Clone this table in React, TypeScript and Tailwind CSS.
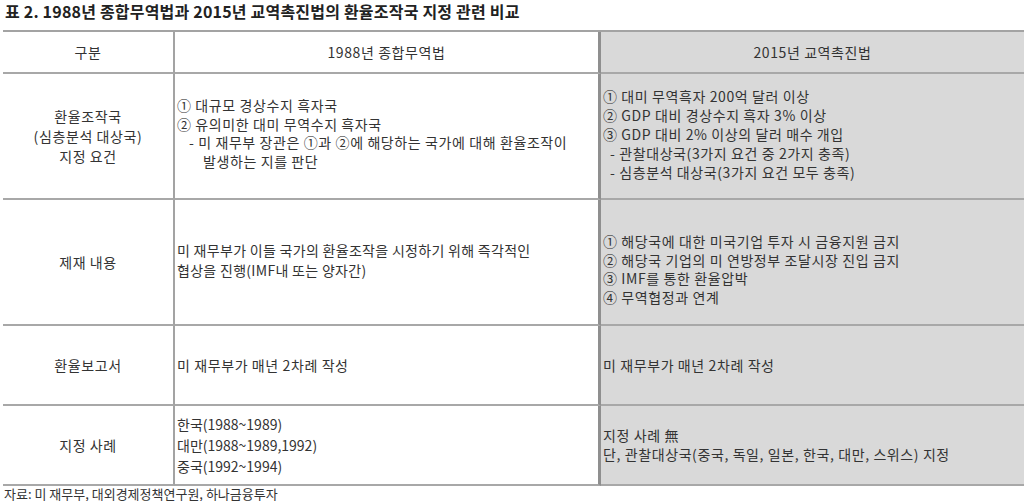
const font = { fontFamily: '"Noto Sans CJK KR", "Noto Sans", sans-serif' };

function Cell({
  children,
  shade,
  center,
  edge,
  className = "",
}: {
  children: React.ReactNode;
  shade?: boolean;
  center?: boolean;
  edge?: "thin" | "thick";
  className?: string;
}) {
  const border =
    edge === "thin"
      ? "border-r-2 border-r-[#a3a3a3]"
      : edge === "thick"
      ? "border-r-[3px] border-r-[#8f8f8f]"
      : "";
  return (
    <div
      className={`flex items-center border-b-2 border-b-[#a8a8a8] ${border} ${
        shade ? "bg-[#d9d9d9]" : "bg-white"
      } ${center ? "justify-center text-center" : "pl-[2px]"} ${className}`}
    >
      {children}
    </div>
  );
}

export default function App() {
  return (
    <div className="w-[1024px] h-[501px] overflow-hidden bg-white text-[#333]" style={font}>
      <div className="h-[30px] pl-[5px] text-[16px] font-bold leading-[23px] tracking-[0.2px] text-[#222]">
        표 2. 1988년 종합무역법과 2015년 교역촉진법의 환율조작국 지정 관련 비교
      </div>

      <div className="ml-[3px] border-t-2 border-t-[#a3a3a3] grid grid-cols-[172px_426px_1fr] grid-rows-[42px_126px_126px_80px_80px] text-[14px] tracking-[0.6px] whitespace-nowrap">
        {/* header */}
        <Cell center edge="thin">구분</Cell>
        <Cell center edge="thick">1988년 종합무역법</Cell>
        <Cell center shade>2015년 교역촉진법</Cell>

        {/* 지정 요건 */}
        <Cell center edge="thin" className="leading-[20px]">
          <div>
            환율조작국
            <br />
            (심층분석 대상국)
            <br />
            지정 요건
          </div>
        </Cell>
        <Cell edge="thick" className="leading-[18.5px] pb-[6px]">
          <div>
            <div>① 대규모 경상수지 흑자국</div>
            <div>② 유의미한 대미 무역수지 흑자국</div>
            <div className="pl-[12px]">- 미 재무부 장관은 ①과 ②에 해당하는 국가에 대해 환율조작이</div>
            <div className="pl-[26px]">발생하는 지를 판단</div>
          </div>
        </Cell>
        <Cell shade className="leading-[19px] pb-[4px]">
          <div>
            <div>① 대미 무역흑자 200억 달러 이상</div>
            <div>② GDP 대비 경상수지 흑자 3% 이상</div>
            <div>③ GDP 대비 2% 이상의 달러 매수 개입</div>
            <div className="pl-[7px]">- 관찰대상국(3가지 요건 중 2가지 충족)</div>
            <div className="pl-[7px]">- 심층분석 대상국(3가지 요건 모두 충족)</div>
          </div>
        </Cell>

        {/* 제재 내용 */}
        <Cell center edge="thin">제재 내용</Cell>
        <Cell edge="thick" className="leading-[20px] pb-[4px] tracking-[0.3px]">
          <div>
            <div>미 재무부가 이들 국가의 환율조작을 시정하기 위해 즉각적인</div>
            <div>협상을 진행(IMF내 또는 양자간)</div>
          </div>
        </Cell>
        <Cell shade className="leading-[18.5px] pt-[14px]">
          <div>
            <div>① 해당국에 대한 미국기업 투자 시 금융지원 금지</div>
            <div>② 해당국 기업의 미 연방정부 조달시장 진입 금지</div>
            <div>③ IMF를 통한 환율압박</div>
            <div>④ 무역협정과 연계</div>
          </div>
        </Cell>

        {/* 환율보고서 */}
        <Cell center edge="thin">환율보고서</Cell>
        <Cell edge="thick">미 재무부가 매년 2차례 작성</Cell>
        <Cell shade>미 재무부가 매년 2차례 작성</Cell>

        {/* 지정 사례 */}
        <Cell center edge="thin">지정 사례</Cell>
        <Cell edge="thick" className="leading-[21px] tracking-[0px]">
          <div>
            <div>한국(1988~1989)</div>
            <div>대만(1988~1989,1992)</div>
            <div>중국(1992~1994)</div>
          </div>
        </Cell>
        <Cell shade className="leading-[19px]">
          <div>
            <div>지정 사례 無</div>
            <div>단, 관찰대상국(중국, 독일, 일본, 한국, 대만, 스위스) 지정</div>
          </div>
        </Cell>
      </div>

      <div className="pl-[4px] text-[13px] leading-[16px] text-[#333]">
        자료: 미 재무부, 대외경제정책연구원, 하나금융투자
      </div>
    </div>
  );
}
